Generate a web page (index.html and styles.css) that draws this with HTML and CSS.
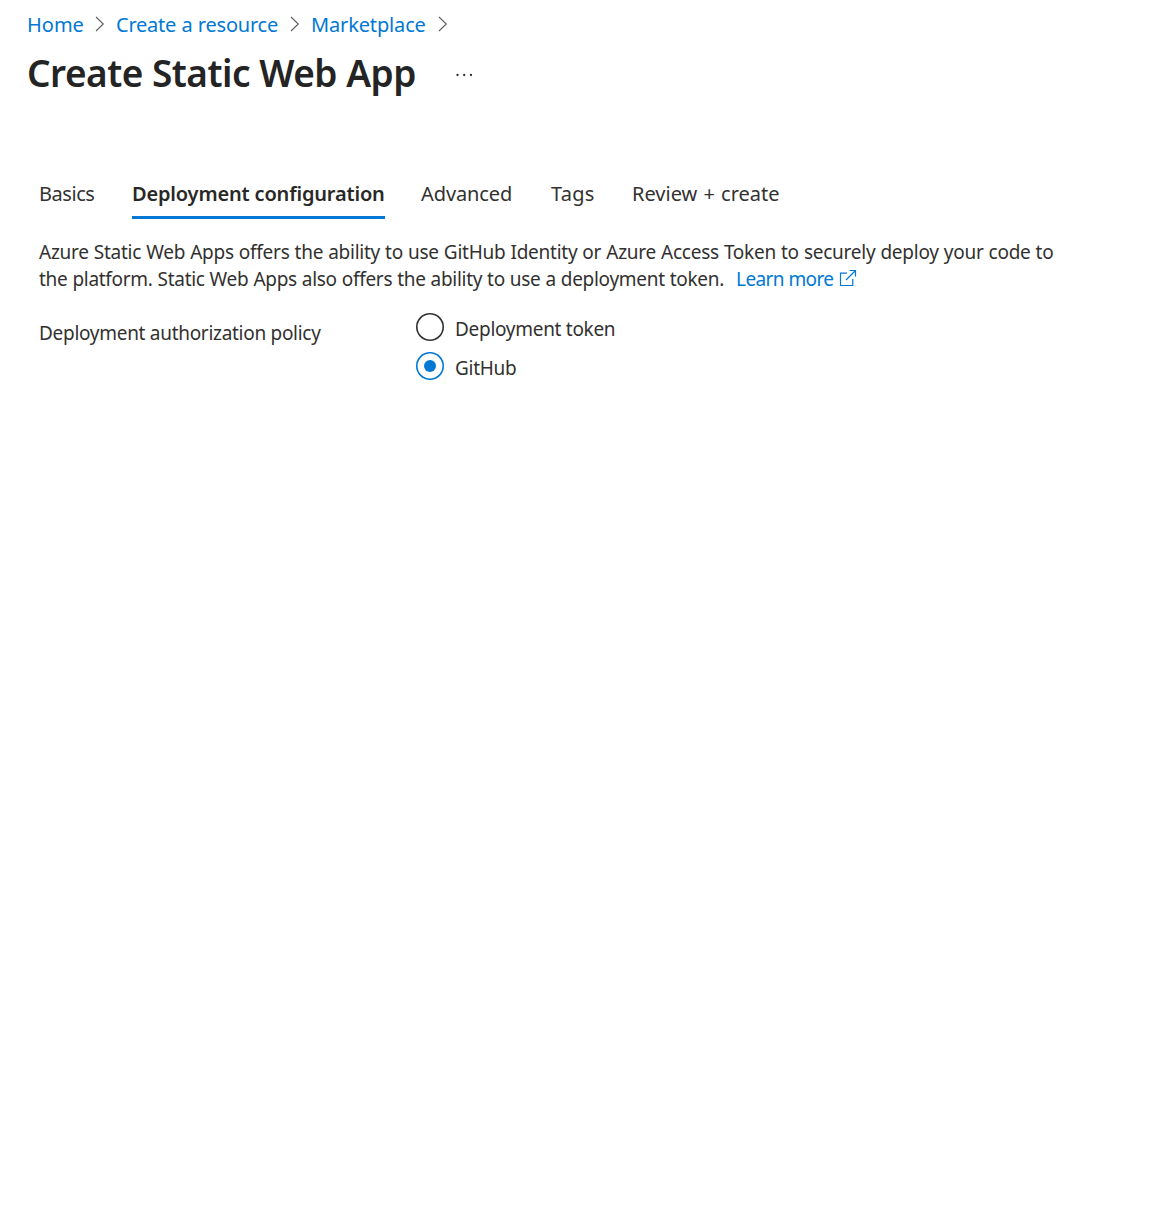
FILE: index.html
```html
<!DOCTYPE html>
<html lang="en">
<head>
<meta charset="utf-8">
<title>Create Static Web App</title>
<link rel="stylesheet" href="styles.css">
</head>
<body>
<header class="header">
  <nav class="breadcrumb">
    <a class="crumb crumb-home">Home</a>
    <svg class="chevron" viewBox="0 0 10 16"><path d="M1 1l7.3 7L1 15"/></svg>
    <a class="crumb crumb-create">Create a resource</a>
    <svg class="chevron" viewBox="0 0 10 16"><path d="M1 1l7.3 7L1 15"/></svg>
    <a class="crumb crumb-market">Marketplace</a>
    <svg class="chevron" viewBox="0 0 10 16"><path d="M1 1l7.3 7L1 15"/></svg>
  </nav>
  <div class="title-row">
    <h1 class="title">Create Static Web App</h1>
    <svg class="more" viewBox="0 0 18 4"><circle cx="2.500" cy="2" r="1.15"/><circle cx="9.200" cy="2" r="1.15"/><circle cx="16" cy="2" r="1.15"/></svg>
  </div>
</header>
<main class="content">
  <div class="tabs">
    <a class="tab tab-basics">Basics</a>
    <a class="tab tab-active">Deployment configuration</a>
    <a class="tab tab-advanced">Advanced</a>
    <a class="tab tab-tags">Tags</a>
    <a class="tab tab-review">Review + create</a>
  </div>
  <div class="intro">
    <div class="line line-first">Azure Static Web Apps offers the ability to use GitHub Identity or Azure Access Token to securely deploy your code to</div>
    <div class="intro-row">
      <span class="line line-second">the platform. Static Web Apps also offers the ability to use a deployment token.</span>
      <a class="learn">Learn more</a>
      <svg class="external" viewBox="0 0 18 18"><path d="M8 4.200H1.500V16.500H13.800V10M10.500 1.500H16.500V7.500M16.500 1.500L7 11"/></svg>
    </div>
  </div>
  <div class="field">
    <span class="label">Deployment authorization policy</span>
    <div class="options">
      <label class="option"><span class="radio"></span><span class="option-token">Deployment token</span></label>
      <label class="option"><span class="radio radio-on"></span><span class="option-github">GitHub</span></label>
    </div>
  </div>
</main>
</body>
</html>
```
FILE: styles.css
```css
* { box-sizing: border-box; }
body {
  margin: 0;
  background: #fff;
  color: #323130;
  font-family: "Noto Sans", "Open Sans", sans-serif;
  font-size: 19px;
  white-space: nowrap;
}
.header { padding: 9px 0 0 27px; }
.breadcrumb { display: flex; align-items: center; height: 30px; color: #0078d4; font-size: 20px; }
.crumb { flex: none; }
.crumb-home { width: 68px; }
.crumb-create { width: 174px; letter-spacing: -0.23px; word-spacing: 0.4px; }
.crumb-market { width: 127px; letter-spacing: -0.15px; }
.chevron { flex: none; width: 10px; height: 16px; margin-right: 11px; fill: none; stroke: #605e5c; stroke-width: 1.1; }
.title-row { display: flex; align-items: center; height: 68px; }
.title { width: 428px; margin: -2px 0 0; font-size: 37px; font-weight: 600; letter-spacing: -0.5px; color: #242424; }
.more { width: 18px; height: 4px; margin-top: 4px; fill: #323130; }
.content { padding: 70px 0 0 39px; }
.tabs { display: flex; height: 42px; font-size: 20px; line-height: 34px; }
.tab { flex: none; }
.tab-basics { width: 93px; letter-spacing: -0.45px; }
.tab-active { width: 253px; margin-right: 36px; border-bottom: 3px solid #0078d4; font-weight: 600; letter-spacing: -0.17px; color: #292827; }
.tab-advanced { width: 130px; letter-spacing: -0.1px; }
.tab-tags { width: 81px; letter-spacing: 0.2px; }
.tab-review { word-spacing: 1px; }
.intro { padding-top: 20px; line-height: 27px; }
.intro-row { display: flex; }
.line-first { letter-spacing: -0.25px; word-spacing: 0.35px; }
.line-second { width: 697px; letter-spacing: -0.29px; word-spacing: 0.3px; }
.learn { width: 103px; letter-spacing: -0.58px; color: #0078d4; }
.external { width: 18px; height: 18px; margin-top: 3px; fill: none; stroke: #0078d4; stroke-width: 1.2; }
.field { display: flex; padding-top: 19px; }
.label { width: 377px; padding-top: 8px; line-height: 27px; letter-spacing: -0.29px; }
.option { display: flex; height: 39px; line-height: 32px; letter-spacing: -0.29px; }
.radio { display: flex; width: 28px; height: 28px; margin: 0 11px 0 0; box-shadow: inset 0 0 0 1.6px #323130; border-radius: 50%; align-items: center; justify-content: center; }
.radio-on { box-shadow: inset 0 0 0 1.6px #0078d4; }
.radio-on::after { content: ""; width: 12px; height: 12px; border-radius: 50%; background: #0078d4; }
.options { padding-top: 1px; }
.option { margin-top: 0; }
```
